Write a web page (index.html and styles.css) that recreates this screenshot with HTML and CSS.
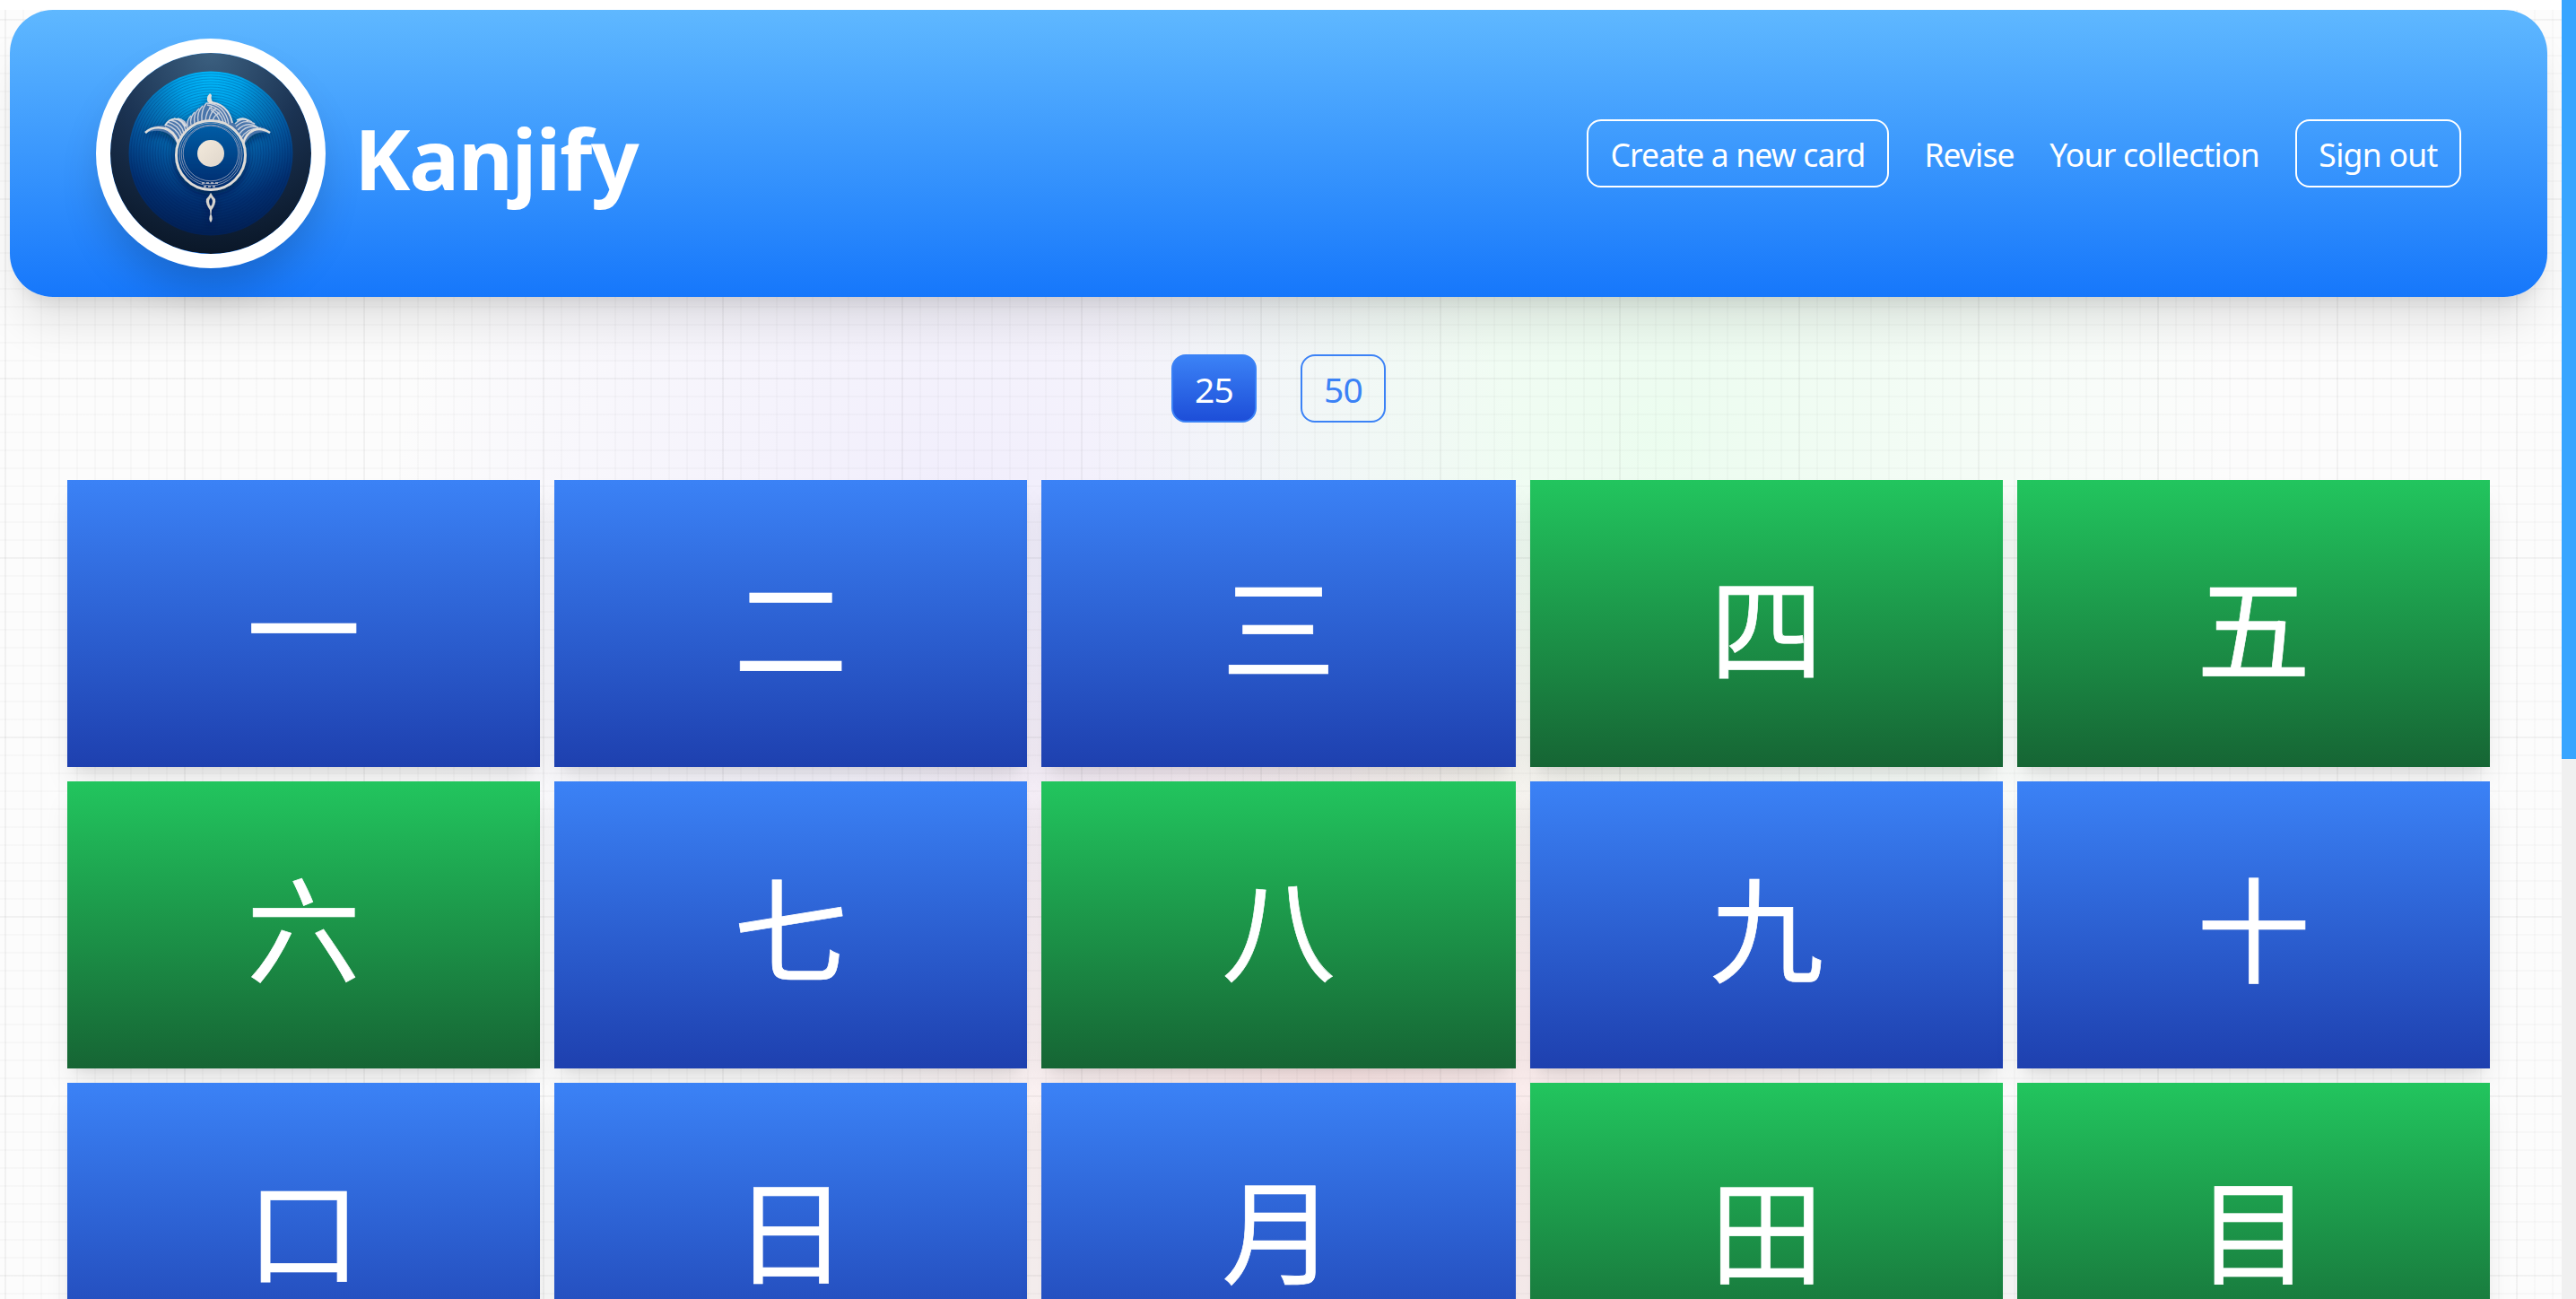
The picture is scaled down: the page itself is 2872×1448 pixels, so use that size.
FILE: index.html
```html
<!DOCTYPE html>
<html lang="en">
<head>
<meta charset="utf-8">
<title>Kanjify</title>
<link rel="stylesheet" href="styles.css">
</head>
<body>
<div class="page">
<div class="content">
<header class="header">
  <a class="brand">
    <svg class="logo" viewBox="0 0 224 224">
      <defs>
        <radialGradient id="rim" cx=".5" cy="0" r="1"><stop offset="0" stop-color="#3c6080"/><stop offset=".5" stop-color="#1b3353"/><stop offset="1" stop-color="#0a1728"/></radialGradient>
        <radialGradient id="disc" cx=".5" cy=".04" r=".95"><stop offset="0" stop-color="#00b8fb"/><stop offset=".2" stop-color="#00a2e8"/><stop offset=".36" stop-color="#047cc0"/><stop offset=".58" stop-color="#04539a"/><stop offset=".8" stop-color="#022f70"/><stop offset="1" stop-color="#022054"/></radialGradient>
        <linearGradient id="eye" x1="0" y1="0" x2="0" y2="1"><stop offset="0" stop-color="#0361aa"/><stop offset="1" stop-color="#022a6c"/></linearGradient>
        <linearGradient id="pearl" x1="0" y1="0" x2="1" y2="1"><stop offset="0" stop-color="#f3eadc"/><stop offset="1" stop-color="#dfd6cb"/></linearGradient>
        <filter id="drop" x="-30%" y="-30%" width="160%" height="170%"><feDropShadow dx="0" dy="4" stdDeviation="4" flood-color="#001238" flood-opacity=".6"/></filter>
      </defs>
      <circle cx="112" cy="112" r="112" fill="url(#rim)"/>
      <circle cx="112" cy="112" r="91.5" fill="url(#disc)"/>
      <g fill="none" stroke="#021f57" stroke-width="1" opacity=".24">
        <circle cx="112" cy="112" r="89"/><circle cx="112" cy="112" r="86"/><circle cx="112" cy="112" r="83"/><circle cx="112" cy="112" r="80"/><circle cx="112" cy="112" r="77"/><circle cx="112" cy="112" r="74"/><circle cx="112" cy="112" r="71"/><circle cx="112" cy="112" r="68"/><circle cx="112" cy="112" r="65"/><circle cx="112" cy="112" r="62"/><circle cx="112" cy="112" r="59"/><circle cx="112" cy="112" r="56"/><circle cx="112" cy="112" r="53"/><circle cx="112" cy="112" r="50"/><circle cx="112" cy="112" r="47"/><circle cx="112" cy="112" r="44"/>
      </g>
      <g filter="url(#drop)">
        <path fill="#4a74aa" d="M39 89Q48 79 61 81Q66 72 75 73Q82 75 87 77Q89 70 94 66Q101 58 112 54Q132 56 136 77L140 80Q146 71 154 75Q160 76 163 82Q173 82 178 89Q158 85 149 103L112 76L75 103Q65 81 39 89Z"/>
        <g fill="none" stroke="#c6cfdc" stroke-width="1.4">
          <path d="M61 83Q71 86 76 99M62 80Q74 84 78 94M64 77Q76 80 80 92M67 75Q79 77 82 90M71 73Q82 75 84 87M75 73Q84 74 86 85"/>
          <path d="M86 82Q85 75 90 70M90 80Q88 73 94 66M94 79Q92 68 99 62M98 77Q96 66 103 59M102 76Q101 64 107 56M106 76Q107 64 113 60M110 75Q112 65 118 62M114 75Q117 68 122 67"/>
          <path d="M107 56Q128 57 132 79M108 58Q125 61 129 78M110 61Q122 64 126 77M112 64Q119 67 122 76"/>
          <path d="M139 79Q148 70 158 77M140 82Q149 73 161 79M142 86Q151 76 163 82M144 90Q152 79 165 83M146 95Q153 83 168 84"/>
        </g>
        <path d="M39 89Q47 81 60 84Q71 87 76 101M178 89Q169 83 160 86Q151 90 148 101" fill="none" stroke="#e0dedb" stroke-width="2.6"/>
        <path d="M61 81Q66 72 75 74Q80 75 84 82M110 55Q131 56 136 78M141 75Q149 71 154 76" fill="none" stroke="#dcdde0" stroke-width="1.8"/>
        <path d="M111 45Q106 50 109 55L117 57Q111 53 113 47Z" fill="#e2e0dc"/>
        <circle cx="112" cy="114" r="38.5" fill="url(#eye)" stroke="#dedbd7" stroke-width="3"/>
        <g fill="none" stroke="#8f9dba" stroke-width=".9"><circle cx="112" cy="113" r="35"/><circle cx="112" cy="113" r="32.8"/><circle cx="112" cy="112" r="30.8"/></g>
        <path d="M102 145H121M104 149H119" stroke="#c4c4ca" stroke-width="1.3" stroke-dasharray="3 2"/>
        <circle cx="112" cy="112" r="15" fill="url(#pearl)"/>
        <path fill="#d7d3ce" fill-rule="evenodd" d="M112 156Q114 160 117 163Q118 168 113 175L112.5 180Q115 185 112 189Q109 185 111.5 180L111 175Q106 168 107 163Q110 160 112 156ZM112 161Q108 166 112 171Q116 166 112 161Z"/>
      </g>
    </svg>
    <h1 class="title">Kanjify</h1>
  </a>
  <nav class="nav">
    <a class="link boxed create">Create a new card</a>
    <a class="link revise">Revise</a>
    <a class="link collection">Your collection</a>
    <a class="link boxed signout">Sign out</a>
  </nav>
</header>
<div class="sizes"><button class="size active">25</button><button class="size">50</button></div>
<main class="cards">
  <div class="card">一</div><div class="card">二</div><div class="card">三</div><div class="card known">四</div><div class="card known">五</div>
  <div class="card known">六</div><div class="card">七</div><div class="card known">八</div><div class="card">九</div><div class="card">十</div>
  <div class="card">口</div><div class="card">日</div><div class="card">月</div><div class="card known">田</div><div class="card known">目</div>
</main>
</div>
<div class="scrollbar"><div class="thumb"></div></div>
</div>
</body>
</html>
```
FILE: styles.css
```css
* { box-sizing: border-box; }
body { margin: 0; background: #fff; font-family: "Noto Sans", "Noto Sans CJK SC", sans-serif; }
.page { display: flex; height: 1448px; overflow: hidden; }
.content {
  flex: 1;
  margin-top: 11px;
  padding: 0 16px 0 11px;
  background:
    repeating-linear-gradient(90deg, transparent 0 5px, rgba(0,0,0,.022) 5px 7px, transparent 7px 200px),
    repeating-linear-gradient(180deg, transparent 0 10px, rgba(0,0,0,.022) 10px 12px, transparent 12px 200px),
    repeating-linear-gradient(90deg, transparent 0 5px, rgba(0,0,0,.02) 5px 7px, transparent 7px 20px),
    repeating-linear-gradient(180deg, transparent 0 10px, rgba(0,0,0,.02) 10px 12px, transparent 12px 20px),
    radial-gradient(circle 640px at 1070px 600px, rgba(180,160,255,.17), transparent),
    radial-gradient(circle 640px at 1850px 480px, rgba(160,255,180,.18), transparent),
    radial-gradient(circle 640px at 1500px 1180px, rgba(255,150,150,.2), transparent),
    #fcfcfc;
}
.header {
  display: flex;
  align-items: center;
  justify-content: space-between;
  height: 320px;
  padding: 0 96px;
  border-radius: 48px;
  background: linear-gradient(#5fb8ff, #1677fb);
  box-shadow: 0 40px 50px -10px rgba(0,0,0,.1), 0 16px 20px -12px rgba(0,0,0,.1);
}
.brand { display: flex; align-items: center; gap: 32px; }
.logo { width: 256px; height: 256px; border: 16px solid #fff; border-radius: 50%; box-shadow: 0 30px 50px -10px rgba(0,0,0,.2); }
.title { margin: 11px 0 0; color: #fff; font: 700 94px/1.2 "Noto Sans", sans-serif; letter-spacing: -1.4px; }
.nav { display: flex; align-items: center; gap: 40px; }
.link { display: flex; justify-content: center; padding-top: 3px; color: #fff; font-size: 35.5px; line-height: 69px; white-space: nowrap; }
.boxed { height: 76px; border: 2px solid #fff; border-radius: 16px; }
.create { width: 337px; letter-spacing: -.85px; }
.revise { width: 99px; letter-spacing: -.9px; }
.collection { width: 234px; letter-spacing: -.75px; }
.signout { width: 185px; letter-spacing: -.7px; }
.sizes { display: flex; justify-content: center; gap: 49px; padding: 64px 0; }
.size { width: 95px; height: 76px; padding: 1px 0 0; border: 2px solid #3b82f6; border-radius: 16px; background: transparent; color: #3b82f6; font: 39px "Noto Sans", sans-serif; letter-spacing: -.8px; }
.size.active { background: linear-gradient(#3b82f6, #1d4ed8); color: #fff; }
.cards { display: grid; grid-template-columns: 527px 527px 1fr 527px 527px; grid-auto-rows: 320px; gap: 16px; padding: 0 64px; }
.card { display: grid; place-items: center; background: linear-gradient(#3b82f6, #1e40af); box-shadow: 0 20px 30px -6px rgba(0,0,0,.1), 0 8px 12px -8px rgba(0,0,0,.1); color: #fff; font: 127px/1 "Noto Sans CJK SC", sans-serif; -webkit-text-stroke: .7px #fff; }
.card.known { background: linear-gradient(#22c55e, #166534); }
.scrollbar { width: 16px; background: #f0f0f0; }
.thumb { height: 846px; background: #38a5ff; }
```
